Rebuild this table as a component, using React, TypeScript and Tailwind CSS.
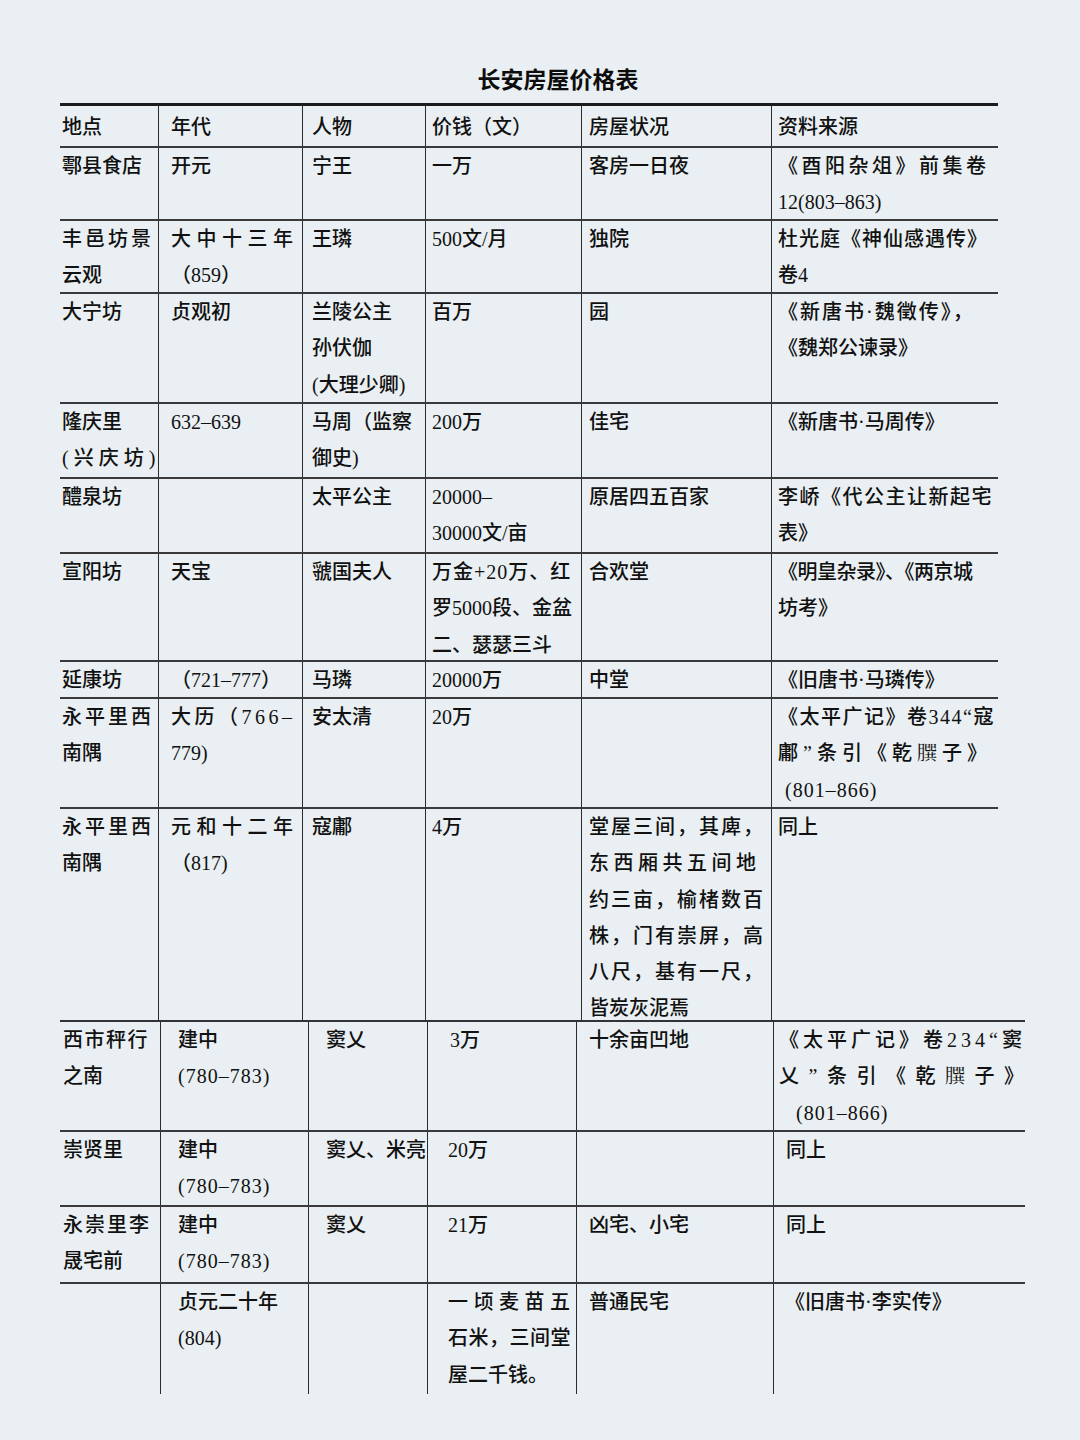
import React from "react";

type Line = string | [string, string];
type Row = { h: string; cells: Line[][] };

const topCols = [
  "w-[98px] pl-[2px]",
  "w-[144px] pl-[12px]",
  "w-[123px] pl-[9px]",
  "w-[156px] pl-[6px]",
  "w-[190px] pl-[7px]",
  "w-[227px] pl-[6px]",
];

const bottomCols = [
  "w-[100px] pl-[3px]",
  "w-[148px] pl-[17px]",
  "w-[119px] pl-[17px]",
  "w-[149px] pl-[20px]",
  "w-[197px] pl-[12px]",
  "w-[252px] pl-[5px]",
];

const topRows: Row[] = [
  {
    h: "h-[43px]",
    cells: [["地点"], ["年代"], ["人物"], ["价钱（文）"], ["房屋状况"], ["资料来源"]],
  },
  {
    h: "h-[73px]",
    cells: [
      ["鄠县食店"],
      ["开元"],
      ["宁王"],
      ["一万"],
      ["客房一日夜"],
      [["《酉阳杂俎》前集卷", "tracking-[3.5px]"], "12(803–863)"],
    ],
  },
  {
    h: "h-[73px]",
    cells: [
      [["丰邑坊景", "tracking-[3px]"], "云观"],
      [["大中十三年", "tracking-[5.5px]"], "（859）"],
      ["王璘"],
      ["500文/月"],
      ["独院"],
      [["杜光庭《神仙感遇传》", "tracking-[1px]"], "卷4"],
    ],
  },
  {
    h: "h-[110px]",
    cells: [
      ["大宁坊"],
      ["贞观初"],
      ["兰陵公主", "孙伏伽", "(大理少卿)"],
      ["百万"],
      ["园"],
      [["《新唐书·魏徵传》，", "tracking-[2px]"], "《魏郑公谏录》"],
    ],
  },
  {
    h: "h-[75px]",
    cells: [
      ["隆庆里", ["(兴庆坊)", "tracking-[5px]"]],
      ["632–639"],
      ["马周（监察", "御史)"],
      ["200万"],
      ["佳宅"],
      ["《新唐书·马周传》"],
    ],
  },
  {
    h: "h-[75px]",
    cells: [
      ["醴泉坊"],
      [],
      ["太平公主"],
      ["20000–", "30000文/亩"],
      ["原居四五百家"],
      [["李峤《代公主让新起宅", "tracking-[1.5px]"], "表》"],
    ],
  },
  {
    h: "h-[108px]",
    cells: [
      ["宣阳坊"],
      ["天宝"],
      ["虢国夫人"],
      [["万金+20万、红", "tracking-[1px]"], "罗5000段、金盆", "二、瑟瑟三斗"],
      ["合欢堂"],
      [["《明皇杂录》、《两京城", "tracking-[-0.5px]"], "坊考》"],
    ],
  },
  {
    h: "h-[37px]",
    cells: [["延康坊"], ["（721–777）"], ["马璘"], ["20000万"], ["中堂"], ["《旧唐书·马璘传》"]],
  },
  {
    h: "h-[110px]",
    cells: [
      [["永平里西", "tracking-[3px]"], "南隅"],
      [["大历（766–", "tracking-[3.5px]"], "779)"],
      ["安太清"],
      ["20万"],
      [],
      [
        ["《太平广记》卷344“寇", "tracking-[1.5px]"],
        ["鄘”条引《乾𦠆子》", "tracking-[5px]"],
        ["(801–866)", "pl-[7px] tracking-[1px]"],
      ],
    ],
  },
  {
    h: "h-[213px]",
    cells: [
      [["永平里西", "tracking-[3px]"], "南隅"],
      [["元和十二年", "tracking-[5.5px]"], "（817)"],
      ["寇鄘"],
      ["4万"],
      [
        ["堂屋三间，其庳，", "tracking-[2px]"],
        ["东西厢共五间地", "tracking-[4.5px]"],
        ["约三亩，榆楮数百", "tracking-[2px]"],
        ["株，门有崇屏，高", "tracking-[2px]"],
        ["八尺，基有一尺，", "tracking-[2px]"],
        "皆炭灰泥焉",
      ],
      ["同上"],
    ],
  },
];

const bottomRows: Row[] = [
  {
    h: "h-[110px]",
    cells: [
      [["西市秤行", "tracking-[1.5px]"], "之南"],
      ["建中", ["(780–783)", "tracking-[1px]"]],
      ["窦乂"],
      [["3万", "pl-[2px]"]],
      ["十余亩凹地"],
      [
        ["《太平广记》卷234“窦", "tracking-[4px]"],
        ["乂”条引《乾𦠆子》", "tracking-[9.5px]"],
        ["(801–866)", "pl-[17px] tracking-[1px]"],
      ],
    ],
  },
  {
    h: "h-[75px]",
    cells: [
      ["崇贤里"],
      ["建中", ["(780–783)", "tracking-[1px]"]],
      ["窦乂、米亮"],
      ["20万"],
      [],
      [["同上", "pl-[7px]"]],
    ],
  },
  {
    h: "h-[77px]",
    cells: [
      [["永崇里李", "tracking-[2px]"], "晟宅前"],
      ["建中", ["(780–783)", "tracking-[1px]"]],
      ["窦乂"],
      ["21万"],
      ["凶宅、小宅"],
      [["同上", "pl-[7px]"]],
    ],
  },
  {
    h: "h-[112px]",
    cells: [
      [],
      ["贞元二十年", "(804)"],
      [],
      [["一顷麦苗五", "tracking-[5.5px]"], ["石米，三间堂", "tracking-[0.5px]"], "屋二千钱。"],
      ["普通民宅"],
      [["《旧唐书·李实传》", "pl-[6px]"]],
    ],
  },
];

function Table({
  rows,
  cols,
  width,
  firstBorder,
  headerPad,
}: {
  rows: Row[];
  cols: string[];
  width: string;
  firstBorder: string;
  headerPad: boolean;
}) {
  return (
    <div className={`ml-[60px] ${width} flex flex-col`}>
      {rows.map((row, ri) => (
        <div
          key={ri}
          className={`flex ${row.h} ${ri === 0 ? firstBorder : "border-t-2 border-[#3a3a3a]"}`}
        >
          {row.cells.map((lines, ci) => (
            <div
              key={ci}
              className={`shrink-0 ${cols[ci]} ${ci > 0 ? "border-l-[1.5px] border-[#2b2b2b]" : ""} ${
                headerPad && ri === 0 ? "pt-[3px]" : ""
              }`}
            >
              {lines.map((l, li) => {
                const text = typeof l === "string" ? l : l[0];
                const cls = typeof l === "string" ? "" : l[1];
                return (
                  <div key={li} className={`whitespace-nowrap ${cls}`}>
                    {text}
                  </div>
                );
              })}
            </div>
          ))}
        </div>
      ))}
    </div>
  );
}

export default function App() {
  return (
    <div className="w-[1080px] h-[1440px] bg-[#e9eff2] overflow-hidden text-[#111]">
      <div className="pt-[62px] pl-[36px] text-center font-['Noto_Sans_CJK_SC',sans-serif] font-bold text-[23px] leading-[32px] text-[#0d0d0d]">
        长安房屋价格表
      </div>
      <div className="mt-[9px] font-['Liberation_Serif','Noto_Sans_CJK_SC',serif] font-medium text-[20px] leading-[36.3px]">
        <Table
          rows={topRows}
          cols={topCols}
          width="w-[938px]"
          firstBorder="border-t-[3px] border-[#1c1c1c]"
          headerPad={true}
        />
        <Table
          rows={bottomRows}
          cols={bottomCols}
          width="w-[965px]"
          firstBorder="border-t-[2.5px] border-[#333333]"
          headerPad={false}
        />
      </div>
    </div>
  );
}
